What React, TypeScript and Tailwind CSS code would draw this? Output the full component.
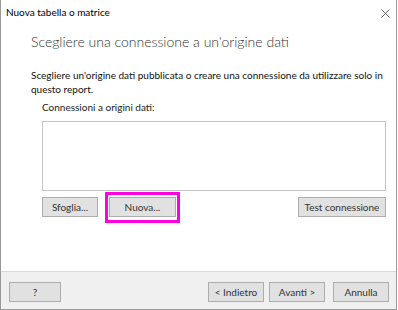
const font = { fontFamily: 'Lato, "Noto Sans", sans-serif' };

function Btn({ label, className }: { label: string; className: string }) {
    return (
        <div className={`h-[20px] flex items-center justify-center whitespace-nowrap bg-[#e1e1e1] border border-[#adadad] text-[10px] text-[#333] ${className}`}>
            {label}
        </div>
    );
}

export default function App() {
    return (
        <div className="w-[398px] h-[310px] bg-white" style={font}>
            <div className="w-[397px] h-[310px] flex flex-col border-l border-r border-b border-[#9a9a9a] bg-white">
                <div className="h-[25px] flex items-center justify-between pl-[5px] pr-[6px]">
                    <span className="text-[10px] text-black">Nuova tabella o matrice</span>
                    <svg width="9" height="9" viewBox="0 0 9 9" className="mt-[1px]">
                        <path d="M0.5 0.5 L8.5 8.5 M8.5 0.5 L0.5 8.5" stroke="#666" strokeWidth="1" />
                    </svg>
                </div>

                <div className="pl-[30px] pr-[1px]">
                    <div className="mt-[7px] text-[14px] leading-[20px] text-[#333] font-light">
                        Scegliere una connessione a un'origine dati
                    </div>
                    <p className="mt-[16px] text-[10px] leading-[14px] text-[#111]">
                        Scegliere un'origine dati pubblicata o creare una connessione da utilizzare solo in questo report.
                    </p>
                    <div className="pl-[11px] pr-[9px]">
                        <div className="mt-[4px] text-[10px] leading-[14px] text-[#222]">Connessioni a origini dati:</div>
                        <div className="mt-[7px] h-[70px] border border-[#c4c4c4] bg-white"></div>
                        <div className="mt-[6px] flex items-center">
                            <Btn label="Sfoglia..." className="w-[56px]" />
                            <div className="relative ml-[11px]">
                                <Btn label="Nuova..." className="w-[67px]" />
                                <span className="absolute left-[-4px] top-[-5px] w-[75px] h-[31px] border-[3px] border-[#ff00e0]"></span>
                            </div>
                            <Btn label="Test connessione" className="w-[88px] ml-auto" />
                        </div>
                    </div>
                </div>

                <div className="flex-1"></div>

                <div className="h-[38px] border-t border-[#d9d9d9] bg-[#f0f0f0] flex items-start pt-[10px] pl-[8px] pr-[7px]">
                    <Btn label="?" className="w-[52px]" />
                    <div className="ml-auto flex">
                        <Btn label="< Indietro" className="w-[56px]" />
                        <Btn label="Avanti >" className="w-[56px] ml-[5px]" />
                        <Btn label="Annulla" className="w-[56px] ml-[8px]" />
                    </div>
                </div>
            </div>
        </div>
    );
}
